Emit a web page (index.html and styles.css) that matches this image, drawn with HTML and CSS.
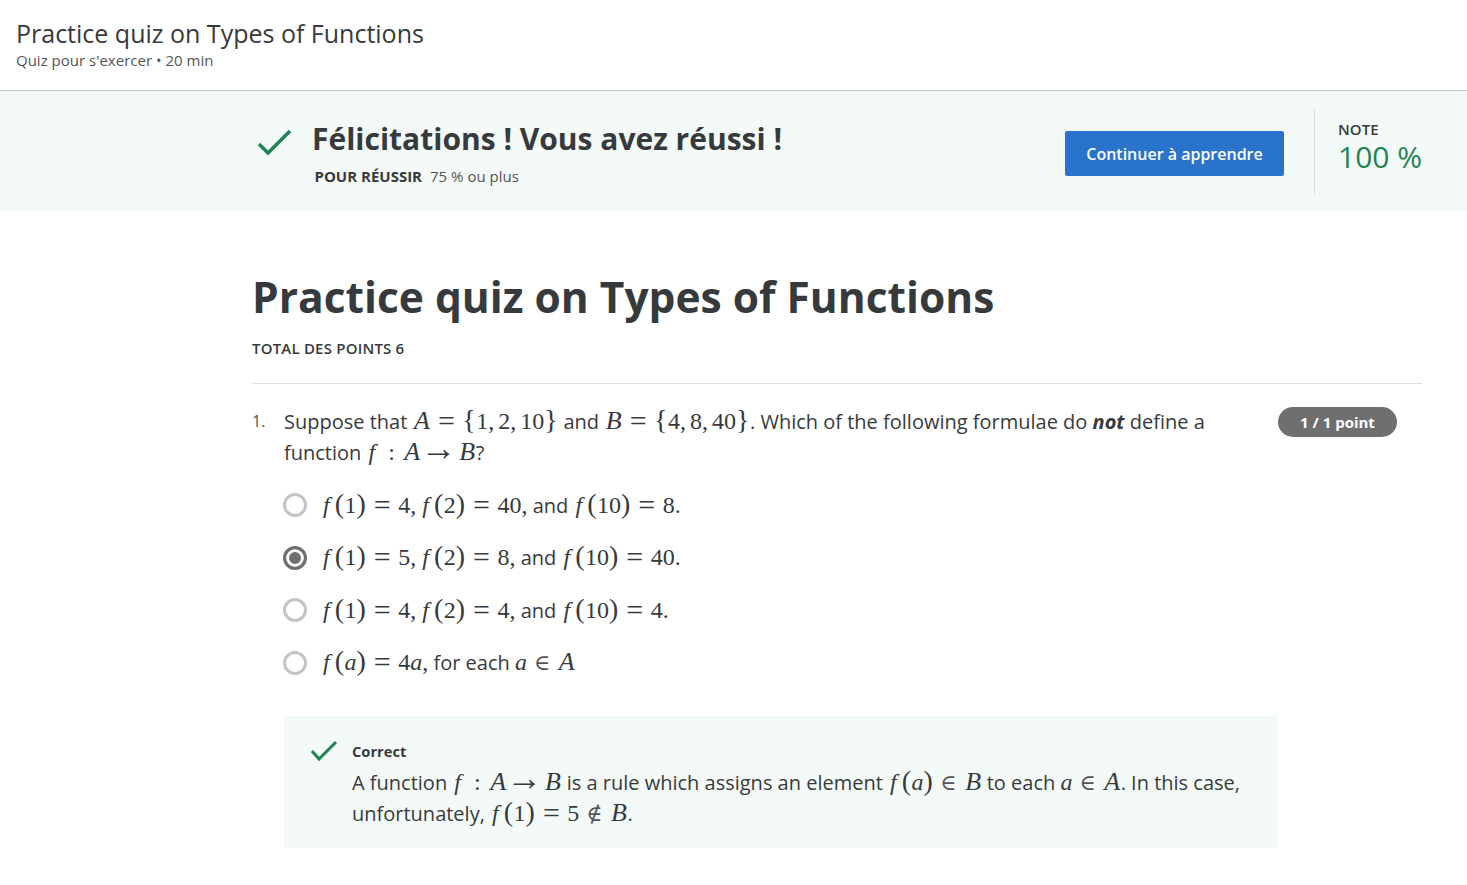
FILE: index.html
```html
<!DOCTYPE html>
<html lang="en">
<head>
    <meta charset="UTF-8">
    <meta name="viewport" content="width=device-width, initial-scale=1.0">
    <title>Practice quiz on Types of Functions</title>
    <link rel="stylesheet" href="styles.css">
</head>
<body>
    <header class="top">
        <div class="top-title">Practice quiz on Types of Functions</div>
        <div class="top-sub">Quiz pour s'exercer • 20 min</div>
    </header>

    <section class="banner">
        <svg class="banner-check" width="36" height="30" viewBox="0 0 36 30"><path d="M2 16 L11 25 L33 3" fill="none" stroke="#1f8354" stroke-width="3.5"/></svg>
        <div class="banner-text">
            <div class="banner-title">Félicitations ! Vous avez réussi !</div>
            <div class="banner-pass"><b>POUR RÉUSSIR</b><span>75 % ou plus</span></div>
        </div>
        <button class="continue">Continuer à apprendre</button>
        <div class="note">
            <div class="note-label">NOTE</div>
            <div class="note-value">100 %</div>
        </div>
    </section>

    <main class="content">
        <h1>Practice quiz on Types of Functions</h1>
        <div class="total">TOTAL DES POINTS 6</div>
        <hr>

        <div class="question">
            <div class="num">1.</div>
            <div class="prompt">Suppose that <span class="m"><i class="u">A</i><span class="r eq">=</span><span class="p">{</span>1, 2, 10<span class="p">}</span></span> and <span class="m"><i class="u">B</i><span class="r eq">=</span><span class="p">{</span>4, 8, 40<span class="p">}</span></span>. Which of the following formulae do <b><em>not</em></b> define a function <span class="m"><i class="f">f</i><span class="r">:</span><i class="u">A</i><span class="arrow">→</span><i class="u">B</i></span>?</div>
            <div class="badge">1 / 1 point</div>
        </div>

        <div class="options">
            <div class="option"><span class="radio"></span><span><span class="m"><i class="f">f</i><span class="p">(</span>1<span class="p">)</span><span class="r eq">=</span>4, <i class="f">f</i><span class="p">(</span>2<span class="p">)</span><span class="r eq">=</span>40,</span> and <span class="m"><i class="f">f</i><span class="p">(</span>10<span class="p">)</span><span class="r eq">=</span>8.</span></span></div>
            <div class="option"><span class="radio on"></span><span><span class="m"><i class="f">f</i><span class="p">(</span>1<span class="p">)</span><span class="r eq">=</span>5, <i class="f">f</i><span class="p">(</span>2<span class="p">)</span><span class="r eq">=</span>8,</span> and <span class="m"><i class="f">f</i><span class="p">(</span>10<span class="p">)</span><span class="r eq">=</span>40.</span></span></div>
            <div class="option"><span class="radio"></span><span><span class="m"><i class="f">f</i><span class="p">(</span>1<span class="p">)</span><span class="r eq">=</span>4, <i class="f">f</i><span class="p">(</span>2<span class="p">)</span><span class="r eq">=</span>4,</span> and <span class="m"><i class="f">f</i><span class="p">(</span>10<span class="p">)</span><span class="r eq">=</span>4.</span></span></div>
            <div class="option"><span class="radio"></span><span><span class="m"><i class="f">f</i><span class="p">(</span><i>a</i><span class="p">)</span><span class="r eq">=</span>4<i>a</i>,</span> for each <span class="m"><i>a</i><span class="elem">∈</span><i class="u">A</i></span></span></div>
        </div>

        <div class="feedback">
            <svg class="feedback-check" width="28" height="22" viewBox="0 0 28 22"><path d="M2 11 L9 19 L26 2" fill="none" stroke="#1f8354" stroke-width="3"/></svg>
            <div>
                <div class="feedback-title">Correct</div>
                <div class="feedback-text">A function <span class="m"><i class="f">f</i><span class="r">:</span><i class="u">A</i><span class="arrow">→</span><i class="u">B</i></span> is a rule which assigns an element <span class="m"><i class="f">f</i><span class="p">(</span><i>a</i><span class="p">)</span><span class="elem">∈</span><i class="u">B</i></span> to each <span class="m"><i>a</i><span class="elem">∈</span><i class="u">A</i></span>. In this case, unfortunately, <span class="m"><i class="f">f</i><span class="p">(</span>1<span class="p">)</span><span class="r eq">=</span>5<span class="elem">∉</span><i class="u">B</i></span>.</div>
            </div>
        </div>
    </main>
</body>
</html>
```

FILE: styles.css
```css
body { margin: 0; font-family: "Open Sans", sans-serif; color: #373a3c; background: #fff; }

.top { height: 91px; box-sizing: border-box; padding: 17px 16px 0; border-bottom: 1px solid #c4c8ca; }
.top-title { font-size: 25px; line-height: 32px; }
.top-sub { font-size: 15px; line-height: 22px; color: #555; }

.banner { height: 120px; background: #f4faf8; display: flex; align-items: center; padding-left: 257px; padding-right: 47px; }
.banner-check { margin-right: 19px; margin-top: -16px; }
.banner-text { flex: 1; margin-top: 2px; }
.banner-title { font-size: 30px; line-height: 40px; font-weight: 700; }
.banner-pass { font-size: 15px; line-height: 20px; margin: 7px 0 0 2.5px; }
.banner-pass b { margin-right: 8px; font-weight: 700; }
.banner-pass span { color: #555; }
.continue { width: 219px; height: 45px; background: #2a73cc; color: #fff; border: none; border-radius: 2px; font: 600 16px "Open Sans", sans-serif; margin-top: 5px; }
.note { height: 85px; width: 82px; margin-left: 30px; border-left: 1px solid #dcdfe0; padding-left: 23px; margin-top: 1px; }
.note-label { font-size: 15px; font-weight: 600; line-height: 20px; margin-top: 10px; letter-spacing: 0.1px; }
.note-value { font-size: 30px; line-height: 30px; color: #1f8354; margin-top: 3px; white-space: nowrap; }

.content { padding: 0 45px 0 252px; }
h1 { margin: 57px 0 0; font-size: 42.5px; line-height: 58px; font-weight: 700; }
.total { font-size: 15px; font-weight: 600; line-height: 20px; margin-top: 12px; letter-spacing: 0.2px; }
hr { border: none; border-top: 1px solid #dcdfe0; margin: 25px 0 0; }

.m { font-family: "Liberation Serif", serif; font-size: 24px; word-spacing: -2px; white-space: nowrap; }
.m i { font-style: italic; }
.m .f { margin: 0 5px 0 2px; }
.m .u { font-size: 26px; line-height: 0; margin: 0 0.5px 0 1.5px; }
.p { font-size: 28px; line-height: 0; letter-spacing: 0.5px; }
.r { margin: 0 8px; line-height: 0; }
.eq { font-size: 30px; margin: 0 7.5px; vertical-align: -2px; }
.arrow { font-size: 36px; line-height: 0; margin-right: 1px; }
.elem { font-family: "DejaVu Serif", serif; font-size: 22px; line-height: 0; margin: 0 7px; color: #555; }

.question { display: flex; margin-top: 22px; }
.num { width: 32px; font-size: 16px; line-height: 31px; color: #555; }
.prompt { width: 968px; font-size: 20px; line-height: 31px; }
.badge { margin: 1px 0 0 26px; height: 30px; width: 119px; background: #6f6f6f; color: #fff; border-radius: 15px; font-size: 15px; font-weight: 700; line-height: 30px; text-align: center; }

.options { margin: 11px 0 0 31px; }
.option { display: flex; align-items: center; height: 52.5px; font-size: 20px; }
.radio { width: 24px; height: 24px; box-sizing: border-box; border: 3px solid #c4c4c4; border-radius: 50%; margin-right: 14px; background: #fff; }
.radio.on { border: 3px solid #6f6f6f; box-shadow: inset 0 0 0 3px #fff; background: #6f6f6f; }

.feedback { display: flex; width: 994px; height: 132px; box-sizing: border-box; margin: 27px 0 0 32px; padding: 24px 26px; background: #f4faf8; }
.feedback-check { margin-right: 14px; flex: none; }
.feedback-title { font-size: 14.7px; font-weight: 700; line-height: 22px; }
.feedback-text { font-size: 20px; line-height: 31px; margin-top: 5px; }
```
